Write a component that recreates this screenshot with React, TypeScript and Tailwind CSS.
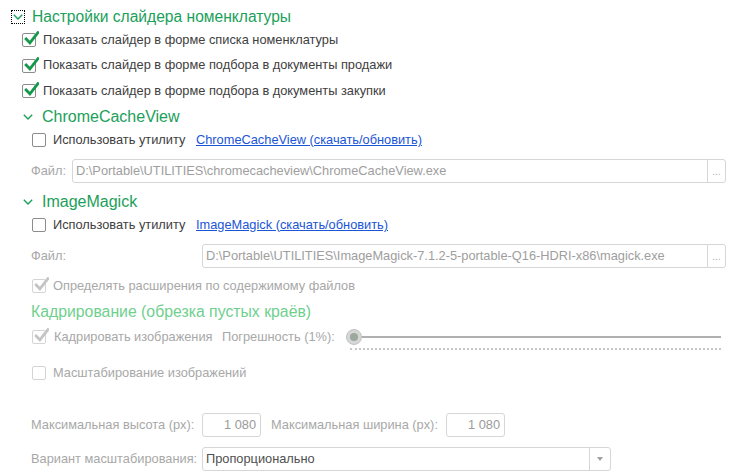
import React from "react";

const GREEN = "text-[#1ba05a]";

const Check = ({ checked, disabled }: { checked?: boolean; disabled?: boolean }) => (
  <span
    className={`relative inline-block w-[14px] h-[14px] shrink-0 rounded-[2px] border bg-white ${
      disabled ? "border-[#d4d4d4]" : "border-[#8c8c8c]"
    }`}
  >
    {checked && (
      <svg viewBox="0 0 14 14" className="absolute left-[1px] top-[-3px] w-[15px] h-[15px]">
        <path
          d="M2 7.5 L5.5 11 L13 1.5"
          fill="none"
          stroke={disabled ? "#c4c4c4" : "#14984a"}
          strokeWidth="2.6"
          strokeLinecap="square"
        />
      </svg>
    )}
  </span>
);

const Chevron = ({ className = "" }: { className?: string }) => (
  <svg viewBox="0 0 10 6" className={`w-[10px] h-[6px] ${className}`}>
    <path d="M0.8 0.8 L5 5 L9.2 0.8" fill="none" stroke="#1ba05a" strokeWidth="1.4" />
  </svg>
);

const CheckRow = ({
  label,
  checked,
  disabled,
  className = "",
}: {
  label: string;
  checked?: boolean;
  disabled?: boolean;
  className?: string;
}) => (
  <div className={`flex items-center gap-[7px] ${className}`}>
    <Check checked={checked} disabled={disabled} />
    <span className={disabled ? "text-[#a8a8a8]" : "text-[#404040]"}>{label}</span>
  </div>
);

const FileInput = ({ value, className = "" }: { value: string; className?: string }) => (
  <div className={`flex h-[24px] border border-[#d6d6d6] rounded-[3px] bg-white ${className}`}>
    <div className="flex-1 flex items-center pl-[3px] text-[#9e9e9e] whitespace-nowrap overflow-hidden">{value}</div>
    <div className="w-[18px] border-l border-[#d6d6d6] flex items-center justify-center text-[#b0b0b0] text-[10px] pt-[2px]">
      ...
    </div>
  </div>
);

const NumInput = ({ value }: { value: string }) => (
  <div className="w-[59px] h-[24px] border border-[#d6d6d6] rounded-[3px] flex items-center justify-end pr-[4px] text-[#9a9a9a]">
    {value}
  </div>
);

export default function App() {
  return (
    <div className="w-[737px] h-[473px] bg-white overflow-hidden text-[12.8px] leading-none font-['Liberation_Sans',Arial,sans-serif]">
      {/* header */}
      <div className="flex items-center h-[18px] mt-[8px] pl-[11px]">
        <span className="w-[14px] h-[14px] border border-dotted border-black flex items-center justify-center">
          <Chevron />
        </span>
        <span className={`ml-[7px] text-[15.6px] ${GREEN}`}>Настройки слайдера номенклатуры</span>
      </div>

      <div className="pl-[22px]">
        <CheckRow className="h-[26px] mt-[1px]" checked label="Показать слайдер в форме списка номенклатуры" />
        <CheckRow className="h-[25px]" checked label="Показать слайдер в форме подбора в документы продажи" />
        <CheckRow className="h-[26px]" checked label="Показать слайдер в форме подбора в документы закупки" />
      </div>

      {/* ChromeCacheView */}
      <div className="flex items-center h-[26px] pl-[23px]">
        <Chevron />
        <span className={`ml-[9px] text-[16px] ${GREEN}`}>ChromeCacheView</span>
      </div>
      <div className="flex items-center h-[20px] pl-[32px]">
        <Check />
        <span className="ml-[7px] w-[143px] text-[#404040]">Использовать утилиту</span>
        <span className="text-[#1a55d6] underline">ChromeCacheView (скачать/обновить)</span>
      </div>
      <div className="flex items-center mt-[9px] pl-[31px] pr-[11px]">
        <span className="w-[41px] text-[#a8a8a8]">Файл:</span>
        <FileInput className="flex-1" value="D:\Portable\UTILITIES\chromecacheview\ChromeCacheView.exe" />
      </div>

      {/* ImageMagick */}
      <div className="flex items-center h-[26px] mt-[6px] pl-[23px]">
        <Chevron />
        <span className={`ml-[9px] text-[16px] ${GREEN}`}>ImageMagick</span>
      </div>
      <div className="flex items-center h-[20px] pl-[32px]">
        <Check />
        <span className="ml-[7px] w-[143px] text-[#404040]">Использовать утилиту</span>
        <span className="text-[#1a55d6] underline">ImageMagick (скачать/обновить)</span>
      </div>
      <div className="flex items-center mt-[9px] pl-[31px] pr-[11px]">
        <span className="w-[171px] text-[#a8a8a8]">Файл:</span>
        <FileInput
          className="flex-1"
          value="D:\Portable\UTILITIES\ImageMagick-7.1.2-5-portable-Q16-HDRI-x86\magick.exe"
        />
      </div>
      <div className="pl-[32px] mt-[8px]">
        <CheckRow className="h-[20px]" checked disabled label="Определять расширения по содержимому файлов" />
      </div>

      {/* Кадрирование */}
      <div className="flex items-center h-[20px] mt-[6px] pl-[31px]">
        <span className="text-[15.8px] text-[#6fd08e]">Кадрирование (обрезка пустых краёв)</span>
      </div>
      <div className="flex items-center h-[20px] mt-[5px] pl-[32px]">
        <Check checked disabled />
        <span className="ml-[8px] w-[168px] text-[#a8a8a8]">Кадрировать изображения</span>
        <span className="w-[124px] text-[#a8a8a8]">Погрешность (1%):</span>
        <div className="relative w-[375px] h-[20px]">
          <div className="absolute left-[14px] right-0 top-[9px] h-[2px] bg-[#b0b0b0]" />
          <div className="absolute left-[4px] right-0 top-[21px] border-t-2 border-dotted border-[#c8c8c8]" />
          <div className="absolute left-0 top-[2px] w-[16px] h-[16px] rounded-full bg-[#d6d6d6] border border-[#c2c2c2] flex items-center justify-center">
            <span className="w-[8px] h-[8px] rounded-full bg-[#9aa89e]" />
          </div>
        </div>
      </div>
      <div className="pl-[32px] mt-[16px]">
        <CheckRow className="h-[20px]" disabled label="Масштабирование изображений" />
      </div>

      <div className="flex items-center mt-[30px] pl-[31px]">
        <span className="w-[171px] text-[#a8a8a8]">Максимальная высота (px):</span>
        <NumInput value="1 080" />
        <span className="ml-[10px] w-[175px] text-[#a8a8a8]">Максимальная ширина (px):</span>
        <NumInput value="1 080" />
      </div>
      <div className="flex items-center mt-[10px] pl-[31px]">
        <span className="w-[171px] text-[#a8a8a8]">Вариант масштабирования:</span>
        <div className="flex w-[409px] h-[24px] border border-[#d6d6d6] rounded-[3px]">
          <div className="flex-1 flex items-center pl-[3px] text-[#505050]">Пропорционально</div>
          <div className="w-[21px] border-l border-[#d6d6d6] flex items-center justify-center">
            <span className="w-0 h-0 border-l-[3px] border-r-[3px] border-t-[4px] border-l-transparent border-r-transparent border-t-[#a0a0a0]" />
          </div>
        </div>
      </div>
    </div>
  );
}
